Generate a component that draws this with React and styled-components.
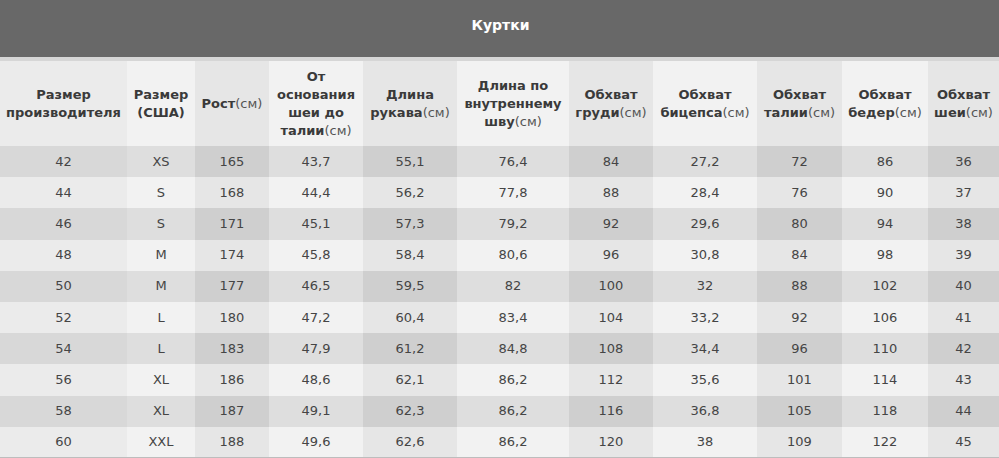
import styled, { createGlobalStyle } from "styled-components";

const GlobalStyle = createGlobalStyle`
    body {
        margin: 0;
        background: #ffffff;
        font-family: "DejaVu Sans", Verdana, sans-serif;
    }
`;

const Wrapper = styled.div`
    width: 999px;
    height: 458px;
    overflow: hidden;
    background: #f2f2f2;
`;

const TitleBar = styled.div`
    height: 61px;
    box-sizing: border-box;
    background: #686868;
    border-bottom: 4px solid #d6d6d6;
    display: flex;
    align-items: center;
    justify-content: center;
    color: #ffffff;
    font-weight: bold;
    font-size: 14px;
    padding-left: 2px;
    padding-bottom: 7px;
`;

const Table = styled.table`
    width: 999px;
    border-collapse: collapse;
    table-layout: fixed;
    border-bottom: 1px solid #bdbdbd;
`;

const HeadRow = styled.tr`
    height: 85px;
`;

const Row = styled.tr`
    height: 31.2px;
`;

const shades = {
    light: { first: "#ebebeb", odd: "#e6e6e6", even: "#f2f2f2" },
    dark: { first: "#d8d8d8", odd: "#cfcfcf", even: "#dedede" },
};

const pick = (tone, col) => {
    if (col === 0) return shades[tone].first;
    return col % 2 === 0 ? shades[tone].odd : shades[tone].even;
};

const HeadCell = styled.th`
    background: ${(p) => pick("light", p.$col)};
    color: #3a3a3a;
    font-size: 13px;
    font-weight: bold;
    line-height: 18px;
    text-align: center;
    vertical-align: middle;
    padding: 0 2px;
`;

const Unit = styled.span`
    font-weight: normal;
    color: #555;
`;

const Cell = styled.td`
    background: ${(p) => pick(p.$tone, p.$col)};
    color: #454545;
    font-size: 13px;
    text-align: center;
    vertical-align: middle;
    padding: 0 0 1px;
`;

const widths = [127, 68, 74, 94, 94, 112, 84, 104, 85, 86, 71];

const heads = [
    { label: ["Размер", "производителя"] },
    { label: ["Размер", "(США)"] },
    { label: ["Рост"], unit: true },
    { label: ["От", "основания", "шеи до", "талии"], unit: true },
    { label: ["Длина", "рукава"], unit: true },
    { label: ["Длина по", "внутреннему", "шву"], unit: true },
    { label: ["Обхват", "груди"], unit: true },
    { label: ["Обхват", "бицепса"], unit: true },
    { label: ["Обхват", "талии"], unit: true },
    { label: ["Обхват", "бедер"], unit: true },
    { label: ["Обхват", "шеи"], unit: true },
];

const rows = [
    ["42", "XS", "165", "43,7", "55,1", "76,4", "84", "27,2", "72", "86", "36"],
    ["44", "S", "168", "44,4", "56,2", "77,8", "88", "28,4", "76", "90", "37"],
    ["46", "S", "171", "45,1", "57,3", "79,2", "92", "29,6", "80", "94", "38"],
    ["48", "M", "174", "45,8", "58,4", "80,6", "96", "30,8", "84", "98", "39"],
    ["50", "M", "177", "46,5", "59,5", "82", "100", "32", "88", "102", "40"],
    ["52", "L", "180", "47,2", "60,4", "83,4", "104", "33,2", "92", "106", "41"],
    ["54", "L", "183", "47,9", "61,2", "84,8", "108", "34,4", "96", "110", "42"],
    ["56", "XL", "186", "48,6", "62,1", "86,2", "112", "35,6", "101", "114", "43"],
    ["58", "XL", "187", "49,1", "62,3", "86,2", "116", "36,8", "105", "118", "44"],
    ["60", "XXL", "188", "49,6", "62,6", "86,2", "120", "38", "109", "122", "45"],
];

export default function App() {
    return (
        <Wrapper>
            <GlobalStyle />
            <TitleBar>Куртки</TitleBar>
            <Table>
                <colgroup>
                    {widths.map((w, i) => (
                        <col key={i} style={{ width: w }} />
                    ))}
                </colgroup>
                <thead>
                    <HeadRow>
                        {heads.map((h, i) => (
                            <HeadCell key={i} $col={i}>
                                {h.label.map((line, j) => (
                                    <span key={j}>
                                        {line}
                                        {h.unit && j === h.label.length - 1 && <Unit>(см)</Unit>}
                                        {j < h.label.length - 1 && <br />}
                                    </span>
                                ))}
                            </HeadCell>
                        ))}
                    </HeadRow>
                </thead>
                <tbody>
                    {rows.map((r, ri) => (
                        <Row key={ri}>
                            {r.map((v, ci) => (
                                <Cell key={ci} $col={ci} $tone={ri % 2 === 0 ? "dark" : "light"}>
                                    {v}
                                </Cell>
                            ))}
                        </Row>
                    ))}
                </tbody>
            </Table>
        </Wrapper>
    );
}
